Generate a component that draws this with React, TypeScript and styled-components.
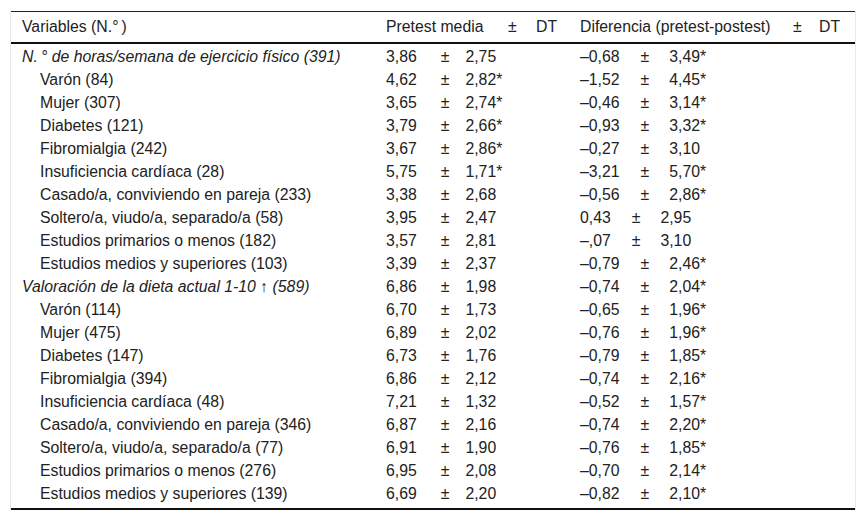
import styled, { createGlobalStyle } from "styled-components";

const GlobalStyle = createGlobalStyle`
    html, body {
        margin: 0;
        padding: 0;
        background: #fff;
    }
    body {
        font-family: "Liberation Sans", Arial, sans-serif;
        color: #222;
    }
`

const Frame = styled.div`
    margin: 11px 0 0 10px;
    width: 844px;
    border-left: 1px solid #e8e8e8;
    border-right: 1px solid #e8e8e8;
`

const Table = styled.table`
    width: 844px;
    table-layout: fixed;
    border-collapse: collapse;
    border-top: 1px solid #222;
    border-bottom: 2px solid #111;
    font-size: 15.8px;
`

const Col = styled.col<{ $w: number }>`
    width: ${p => p.$w}px;
`

const HeadRow = styled.tr`
    border-bottom: 2px solid #111;
    th {
        padding: 6px 11px;
        line-height: 18px;
        font-weight: normal;
        text-align: left;
        white-space: nowrap;
    }
`

const Row = styled.tr`
    td {
        padding: 3px 11px 0;
        line-height: 20px;
        white-space: nowrap;
        vertical-align: top;
    }
    &:last-child td {
        padding-bottom: 4px;
    }
`

const Label = styled.td<{ $group?: boolean }>`
    font-style: ${p => (p.$group ? "italic" : "normal")};
    && {
        padding-left: ${p => (p.$group ? 11 : 29)}px;
    }
`

const Stat = styled.span<{ $first: number; $second: number }>`
    display: inline-flex;
    .pm {
        margin: 0 ${p => p.$second}px 0 ${p => p.$first}px;
    }
`

type Item = {
    label: string
    group?: boolean
    mean: string
    sd: string
    diff: string
    dsd: string
}

const data: Item[] = [
    { label: "N.\u2009° de horas/semana de ejercicio físico (391)", group: true, mean: "3,86", sd: "2,75", diff: "–0,68", dsd: "3,49*" },
    { label: "Varón (84)", mean: "4,62", sd: "2,82*", diff: "–1,52", dsd: "4,45*" },
    { label: "Mujer (307)", mean: "3,65", sd: "2,74*", diff: "–0,46", dsd: "3,14*" },
    { label: "Diabetes (121)", mean: "3,79", sd: "2,66*", diff: "–0,93", dsd: "3,32*" },
    { label: "Fibromialgia (242)", mean: "3,67", sd: "2,86*", diff: "–0,27", dsd: "3,10" },
    { label: "Insuficiencia cardíaca (28)", mean: "5,75", sd: "1,71*", diff: "–3,21", dsd: "5,70*" },
    { label: "Casado/a, conviviendo en pareja (233)", mean: "3,38", sd: "2,68", diff: "–0,56", dsd: "2,86*" },
    { label: "Soltero/a, viudo/a, separado/a (58)", mean: "3,95", sd: "2,47", diff: "0,43", dsd: "2,95" },
    { label: "Estudios primarios o menos (182)", mean: "3,57", sd: "2,81", diff: "–,07", dsd: "3,10" },
    { label: "Estudios medios y superiores (103)", mean: "3,39", sd: "2,37", diff: "–0,79", dsd: "2,46*" },
    { label: "Valoración de la dieta actual 1-10 ↑ (589)", group: true, mean: "6,86", sd: "1,98", diff: "–0,74", dsd: "2,04*" },
    { label: "Varón (114)", mean: "6,70", sd: "1,73", diff: "–0,65", dsd: "1,96*" },
    { label: "Mujer (475)", mean: "6,89", sd: "2,02", diff: "–0,76", dsd: "1,96*" },
    { label: "Diabetes (147)", mean: "6,73", sd: "1,76", diff: "–0,79", dsd: "1,85*" },
    { label: "Fibromialgia (394)", mean: "6,86", sd: "2,12", diff: "–0,74", dsd: "2,16*" },
    { label: "Insuficiencia cardíaca (48)", mean: "7,21", sd: "1,32", diff: "–0,52", dsd: "1,57*" },
    { label: "Casado/a, conviviendo en pareja (346)", mean: "6,87", sd: "2,16", diff: "–0,74", dsd: "2,20*" },
    { label: "Soltero/a, viudo/a, separado/a (77)", mean: "6,91", sd: "1,90", diff: "–0,76", dsd: "1,85*" },
    { label: "Estudios primarios o menos (276)", mean: "6,95", sd: "2,08", diff: "–0,70", dsd: "2,14*" },
    { label: "Estudios medios y superiores (139)", mean: "6,69", sd: "2,20", diff: "–0,82", dsd: "2,10*" },
]

const widths = [364, 122, 28, 44, 213, 26, 47]

export default function App() {
    return (
        <>
            <GlobalStyle />
            <Frame>
                <Table>
                    <colgroup>
                        {widths.map((w, i) => <Col key={i} $w={w} />)}
                    </colgroup>
                    <thead>
                        <HeadRow>
                            <th>Variables (N.°&#8201;)</th>
                            <th>Pretest media</th>
                            <th>±</th>
                            <th>DT</th>
                            <th>Diferencia (pretest-postest)</th>
                            <th>±</th>
                            <th>DT</th>
                        </HeadRow>
                    </thead>
                    <tbody>
                        {
                            data.map(item => {
                                return (
                                    <Row key={item.label}>
                                        <Label $group={item.group}>{item.label}</Label>
                                        <td>
                                            <Stat $first={24} $second={16}>
                                                <span>{item.mean}</span>
                                                <span className="pm">±</span>
                                                <span>{item.sd}</span>
                                            </Stat>
                                        </td>
                                        <td />
                                        <td />
                                        <td>
                                            <Stat $first={21} $second={20}>
                                                <span>{item.diff}</span>
                                                <span className="pm">±</span>
                                                <span>{item.dsd}</span>
                                            </Stat>
                                        </td>
                                        <td />
                                        <td />
                                    </Row>
                                )
                            })
                        }
                    </tbody>
                </Table>
            </Frame>
        </>
    )
}
